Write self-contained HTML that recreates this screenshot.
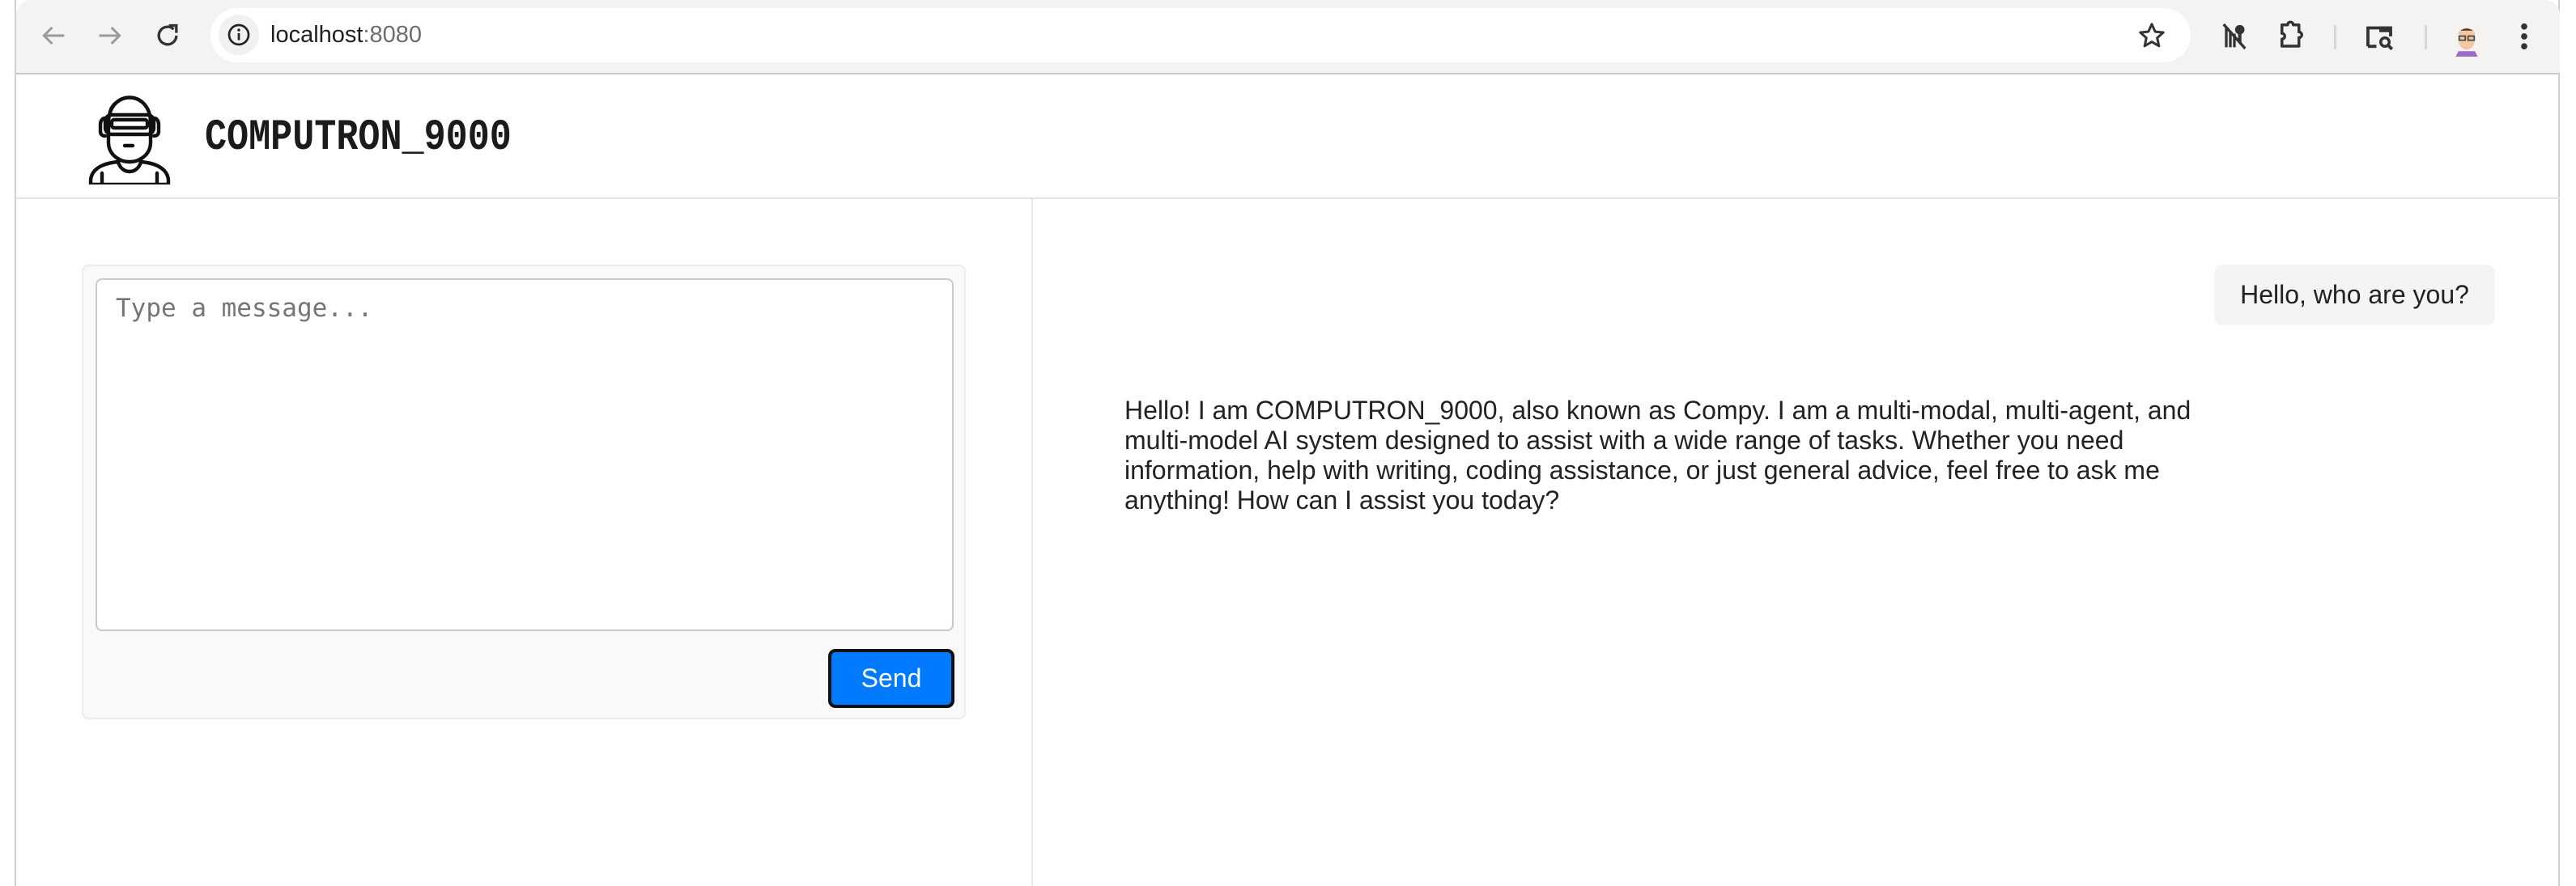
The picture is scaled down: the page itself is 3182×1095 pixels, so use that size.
<!DOCTYPE html>
<html><head><meta charset="utf-8"><style>
html,body{margin:0;padding:0;width:3182px;height:1095px;overflow:hidden;background:#fff;font-family:"Liberation Sans",sans-serif;}
.abs{position:absolute;}
</style></head><body>
<div class="abs" style="left:18px;top:0;width:3144px;height:1095px;border-left:2px solid #d0d0d0;border-right:2px solid #d0d0d0;box-sizing:border-box;"></div>
<div class="abs" style="left:20px;top:0;width:3142px;height:90px;background:#f4f3f2;border-bottom:2px solid #ccc9c6;border-top-left-radius:18px;border-top-right-radius:18px;"></div>
<svg class="abs" style="left:46px;top:24px" width="40" height="40" viewBox="0 0 24 24"><path d="M20 12H5M11 6l-6 6 6 6" fill="none" stroke="#9a9a9a" stroke-width="1.8"/></svg>
<svg class="abs" style="left:116px;top:24px" width="40" height="40" viewBox="0 0 24 24"><path d="M4 12h15M13 6l6 6-6 6" fill="none" stroke="#9a9a9a" stroke-width="1.8"/></svg>
<svg class="abs" style="left:187px;top:24px" width="40" height="40" viewBox="0 0 24 24"><path d="M18.5 12a6.5 6.5 0 1 1-2-4.7" fill="none" stroke="#333" stroke-width="2"/><path d="M13 4.5h5.5V10" fill="none" stroke="#333" stroke-width="2"/></svg>
<div class="abs" style="left:260px;top:10px;width:2446px;height:67px;background:#fff;border-radius:34px;"></div>
<div class="abs" style="left:270px;top:18px;width:50px;height:50px;border-radius:25px;background:#f1f1f1;"></div>
<svg class="abs" style="left:279px;top:27px" width="32" height="32" viewBox="0 0 24 24"><circle cx="12" cy="12" r="9" fill="none" stroke="#222" stroke-width="2"/><rect x="11" y="10.5" width="2" height="6.5" fill="#222"/><circle cx="12" cy="7.6" r="1.3" fill="#222"/></svg>
<div class="abs" style="left:334px;top:24px;font-size:29px;color:#1f1f1f;line-height:38px;">localhost<span style="color:#6d6d6d">:8080</span></div>
<svg class="abs" style="left:2638px;top:24px" width="40" height="40" viewBox="0 0 24 24"><path d="M12 3.5l2.5 5.6 6 .6-4.5 4 1.3 6L12 16.6 6.7 19.7 8 13.7 3.5 9.7l6-.6z" fill="none" stroke="#333" stroke-width="1.8" stroke-linejoin="round"/></svg>
<svg class="abs" style="left:2740px;top:24px" width="40" height="42" viewBox="0 0 24 24"><path d="M6 6v14M9 8v12M12 10v10" stroke="#333" stroke-width="2"/><circle cx="16" cy="7" r="3.5" fill="#333"/><path d="M16 10v7" stroke="#333" stroke-width="2.5"/><path d="M4 3l16 18" stroke="#333" stroke-width="2"/></svg>
<svg class="abs" style="left:2810px;top:22px" width="42" height="42" viewBox="0 0 24 24"><path d="M5 5h4a2 2 0 0 1 4 0h4v5a2 2 0 0 1 0 4v6H5v-5a2 2 0 0 0 0-4z" fill="none" stroke="#333" stroke-width="2" stroke-linejoin="round"/></svg>
<div class="abs" style="left:2883px;top:31px;width:3px;height:30px;background:#d8d6d3;border-radius:2px;"></div>
<svg class="abs" style="left:2918px;top:24px" width="42" height="42" viewBox="0 0 24 24"><path d="M4 19V6h16v6" fill="none" stroke="#333" stroke-width="2.2"/><rect x="12" y="5" width="8" height="4" fill="#333"/><path d="M4 19h6" stroke="#333" stroke-width="2.2"/><circle cx="16" cy="16" r="3" fill="none" stroke="#333" stroke-width="2"/><path d="M18 18l3 3" stroke="#333" stroke-width="2.2"/></svg>
<div class="abs" style="left:2995px;top:31px;width:3px;height:30px;background:#d8d6d3;border-radius:2px;"></div>
<svg class="abs" style="left:3030px;top:26px" width="34" height="44" viewBox="0 0 20 26"><path d="M4 22h12l2 4H2z" fill="#9a6bc8"/><ellipse cx="10" cy="13" rx="6" ry="8" fill="#f1c7a4"/><path d="M4 10c0-6 12-6 12 0l-1-3H5z" fill="#5a3a2a"/><rect x="4.5" y="11" width="4.5" height="3" fill="none" stroke="#444" stroke-width="1"/><rect x="11" y="11" width="4.5" height="3" fill="none" stroke="#444" stroke-width="1"/></svg>
<svg class="abs" style="left:3106px;top:24px" width="24" height="42" viewBox="0 0 12 24"><circle cx="6" cy="5" r="2.2" fill="#333"/><circle cx="6" cy="12" r="2.2" fill="#333"/><circle cx="6" cy="19" r="2.2" fill="#333"/></svg>

<div class="abs" style="left:20px;top:244px;width:3142px;height:2px;background:#e4e4e8;"></div>
<svg class="abs" style="left:100px;top:108px" width="120" height="120" viewBox="0 0 60 60">
<g fill="none" stroke="#111" stroke-width="2.2" stroke-linecap="round" stroke-linejoin="round">
<path d="M17 22c0-21 26-21 26 0v12c0 7-6 12-13 12s-13-5-13-12z"/>
<path d="M21 10c-2 2-3 4-3 6"/>
<rect x="15" y="17" width="30" height="12" rx="4"/>
<rect x="19" y="20" width="22" height="5" rx="1.5"/>
<path d="M15 19c-2 0-3 2-3 4v4c0 2 1 3 3 3M45 19c2 0 3 2 3 4v4c0 2-1 3-3 3"/>
<path d="M27 36h5"/>
<path d="M23 44v2c-12 1-17 6-17 12v2h48v-2c0-6-5-11-17-12v-2"/>
<path d="M23 46c1 4 4 6 7 6s6-2 7-6"/>
<path d="M13 53v6M47 53v6"/>
</g></svg>
<div class="abs" style="left:253px;top:141px;font-family:'Liberation Mono',monospace;font-weight:bold;font-size:54px;line-height:60px;color:#1b1b1b;letter-spacing:0px;transform:scaleX(0.835);transform-origin:left;">COMPUTRON_9000</div>

<div class="abs" style="left:1274px;top:246px;width:2px;height:849px;background:#e8e8e8;"></div>

<div class="abs" style="left:101px;top:327px;width:1092px;height:562px;background:#f9f9f9;border:2px solid #ececec;border-radius:8px;box-sizing:border-box;"></div>
<div class="abs" style="left:118px;top:344px;width:1060px;height:436px;background:#fff;border:2px solid #c8c8c8;border-radius:8px;box-sizing:border-box;"></div>
<div class="abs" style="left:143px;top:361px;font-family:'DejaVu Sans Mono','Liberation Mono',monospace;font-size:31px;line-height:40px;color:#767676;">Type a message...</div>
<div class="abs" style="left:1023px;top:802px;width:156px;height:73px;background:#007bff;border:4px solid #111;border-radius:9px;box-sizing:border-box;color:#fff;font-size:32px;line-height:65px;text-align:center;">Send</div>

<div class="abs" style="left:2735px;top:327px;width:347px;height:75px;background:#f4f4f4;border-radius:10px;color:#222;font-size:32px;line-height:75px;text-align:center;">Hello, who are you?</div>
<div class="abs" style="left:1389px;top:489px;width:1400px;font-size:32px;line-height:37px;color:#222;white-space:nowrap;">Hello! I am COMPUTRON_9000, also known as Compy. I am a multi-modal, multi-agent, and<br>multi-model AI system designed to assist with a wide range of tasks. Whether you need<br>information, help with writing, coding assistance, or just general advice, feel free to ask me<br>anything! How can I assist you today?</div>
</body></html>
